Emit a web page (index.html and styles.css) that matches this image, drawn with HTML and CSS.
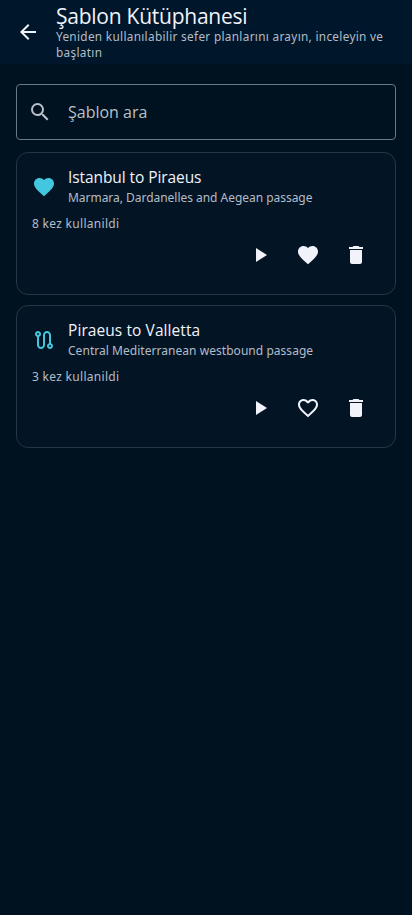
FILE: index.html
```html
<!DOCTYPE html>
<html lang="tr">
<head>
<meta charset="utf-8">
<meta name="viewport" content="width=device-width, initial-scale=1">
<title>Şablon Kütüphanesi</title>
<link rel="stylesheet" href="styles.css">
</head>
<body>
<header class="app-bar">
  <svg class="icon" viewBox="0 0 24 24"><path d="M20 11H7.83l5.59-5.59L12 4l-8 8 8 8 1.41-1.41L7.83 13H20z"/></svg>
  <div class="heading">
    <h1>Şablon Kütüphanesi</h1>
    <p>Yeniden kullanılabilir sefer planlarını arayın, inceleyin ve<br>başlatın</p>
  </div>
</header>
<main>
  <div class="search">
    <svg class="icon" viewBox="0 0 24 24"><path d="M15.5 14h-.79l-.28-.27A6.47 6.47 0 0 0 16 9.5 6.5 6.5 0 1 0 9.5 16c1.61 0 3.09-.59 4.23-1.57l.27.28v.79l5 4.99L20.49 19zm-6 0a4.5 4.5 0 1 1 0-9 4.5 4.5 0 0 1 0 9z"/></svg>
    <span>Şablon ara</span>
  </div>
  <article class="card">
    <div class="card-head">
      <svg class="icon accent" viewBox="0 0 24 24"><path d="M12 21.35l-1.45-1.32C5.4 15.36 2 12.28 2 8.5 2 5.42 4.42 3 7.5 3c1.74 0 3.41.81 4.5 2.09C13.09 3.81 14.76 3 16.5 3 19.58 3 22 5.42 22 8.5c0 3.78-3.4 6.86-8.55 11.54z"/></svg>
      <div>
        <h2 class="name-a">Istanbul to Piraeus</h2>
        <p class="route-a">Marmara, Dardanelles and Aegean passage</p>
      </div>
    </div>
    <p class="usage">8 kez kullanildi</p>
    <div class="actions">
      <svg class="icon" viewBox="0 0 24 24"><path d="M8 5v14l11-7z"/></svg>
      <svg class="icon" viewBox="0 0 24 24"><path d="M12 21.35l-1.45-1.32C5.4 15.36 2 12.28 2 8.5 2 5.42 4.42 3 7.5 3c1.74 0 3.41.81 4.5 2.09C13.09 3.81 14.76 3 16.5 3 19.58 3 22 5.42 22 8.5c0 3.78-3.4 6.86-8.55 11.54z"/></svg>
      <svg class="icon" viewBox="0 0 24 24"><path d="M6 19c0 1.1.9 2 2 2h8c1.1 0 2-.9 2-2V7H6zM19 4h-3.5l-1-1h-5l-1 1H5v2h14z"/></svg>
    </div>
  </article>
  <article class="card">
    <div class="card-head">
      <svg class="icon accent" viewBox="0 0 24 24"><path fill-rule="evenodd" d="M19 15.18V7c0-2.21-1.79-4-4-4s-4 1.79-4 4v10c0 1.1-.9 2-2 2s-2-.9-2-2V8.82C8.16 8.4 9 7.3 9 6c0-1.66-1.34-3-3-3S3 4.34 3 6c0 1.3.84 2.4 2 2.82V17c0 2.21 1.79 4 4 4s4-1.79 4-4V7c0-1.1.9-2 2-2s2 .9 2 2v8.18c-1.16.41-2 1.51-2 2.82 0 1.66 1.34 3 3 3s3-1.34 3-3c0-1.3-.84-2.4-2-2.82zM6 7a1 1 0 1 1 0-2 1 1 0 0 1 0 2zm12 12a1 1 0 1 1 0-2 1 1 0 0 1 0 2z"/></svg>
      <div>
        <h2 class="name-b">Piraeus to Valletta</h2>
        <p class="route-b">Central Mediterranean westbound passage</p>
      </div>
    </div>
    <p class="usage">3 kez kullanildi</p>
    <div class="actions">
      <svg class="icon" viewBox="0 0 24 24"><path d="M8 5v14l11-7z"/></svg>
      <svg class="icon" viewBox="0 0 24 24"><path d="M16.5 3c-1.74 0-3.41.81-4.5 2.09C10.91 3.81 9.24 3 7.5 3 4.42 3 2 5.42 2 8.5c0 3.78 3.4 6.86 8.55 11.54L12 21.35l1.45-1.32C18.6 15.36 22 12.28 22 8.5 22 5.42 19.58 3 16.5 3zm-4.4 15.55l-.1.1-.1-.1C7.14 14.24 4 11.39 4 8.5 4 6.5 5.5 5 7.5 5c1.54 0 3.04.99 3.57 2.36h1.87C13.46 5.99 14.96 5 16.5 5c2 0 3.5 1.5 3.5 3.5 0 2.89-3.14 5.74-7.9 10.05z"/></svg>
      <svg class="icon" viewBox="0 0 24 24"><path d="M6 19c0 1.1.9 2 2 2h8c1.1 0 2-.9 2-2V7H6zM19 4h-3.5l-1-1h-5l-1 1H5v2h14z"/></svg>
    </div>
  </article>
</main>
</body>
</html>
```
FILE: styles.css
```css
* { box-sizing: border-box; }
body {
  margin: 0;
  min-height: 100vh;
  background: #00111f;
  color: #f1f2fa;
  font-family: "Open Sans", "Noto Sans", sans-serif;
}
h1, h2, p { margin: 0; font-weight: 400; white-space: nowrap; }
.icon { width: 24px; height: 24px; flex: none; fill: currentColor; display: block; }
.app-bar {
  height: 64px;
  padding: 0 16px;
  display: flex;
  align-items: center;
  gap: 16px;
  background: #00172b;
}
h1 { font-size: 21px; line-height: 24px; letter-spacing: -0.25px; }
p { font-family: "Noto Sans", sans-serif; font-size: 12px; line-height: 16px; color: #b4bcc8; }
.heading p { font-size: 11.8px; letter-spacing: 0.31px; }
main { padding: 20px 16px; }
.search {
  height: 56px;
  border: 1px solid #667a87;
  border-radius: 4px;
  display: flex;
  align-items: center;
  gap: 16px;
  padding: 0 11px;
  margin-bottom: 12px;
  color: #b9c1c9;
  font-size: 16px;
  line-height: 24px;
}
.search span { padding-bottom: 1px; }
.card {
  height: 143px;
  margin-bottom: 10px;
  padding: 13px 15px;
  background: #031525;
  border: 1px solid #233746;
  border-radius: 12px;
}
.card-head { display: flex; align-items: center; gap: 12px; height: 42px; }
.accent { color: #43c7de; }
h2 { font-size: 15.5px; line-height: 24px; margin: -3px 0 1px; }
.name-a { letter-spacing: -0.08px; }
.name-b { letter-spacing: 0.08px; }
.route-a { letter-spacing: -0.03px; }
.route-b { letter-spacing: 0.04px; }
.usage { margin-top: 8px; letter-spacing: 0.3px; }
.actions { display: flex; justify-content: flex-end; gap: 24px; margin-top: 11px; padding: 0 12px; }
```
